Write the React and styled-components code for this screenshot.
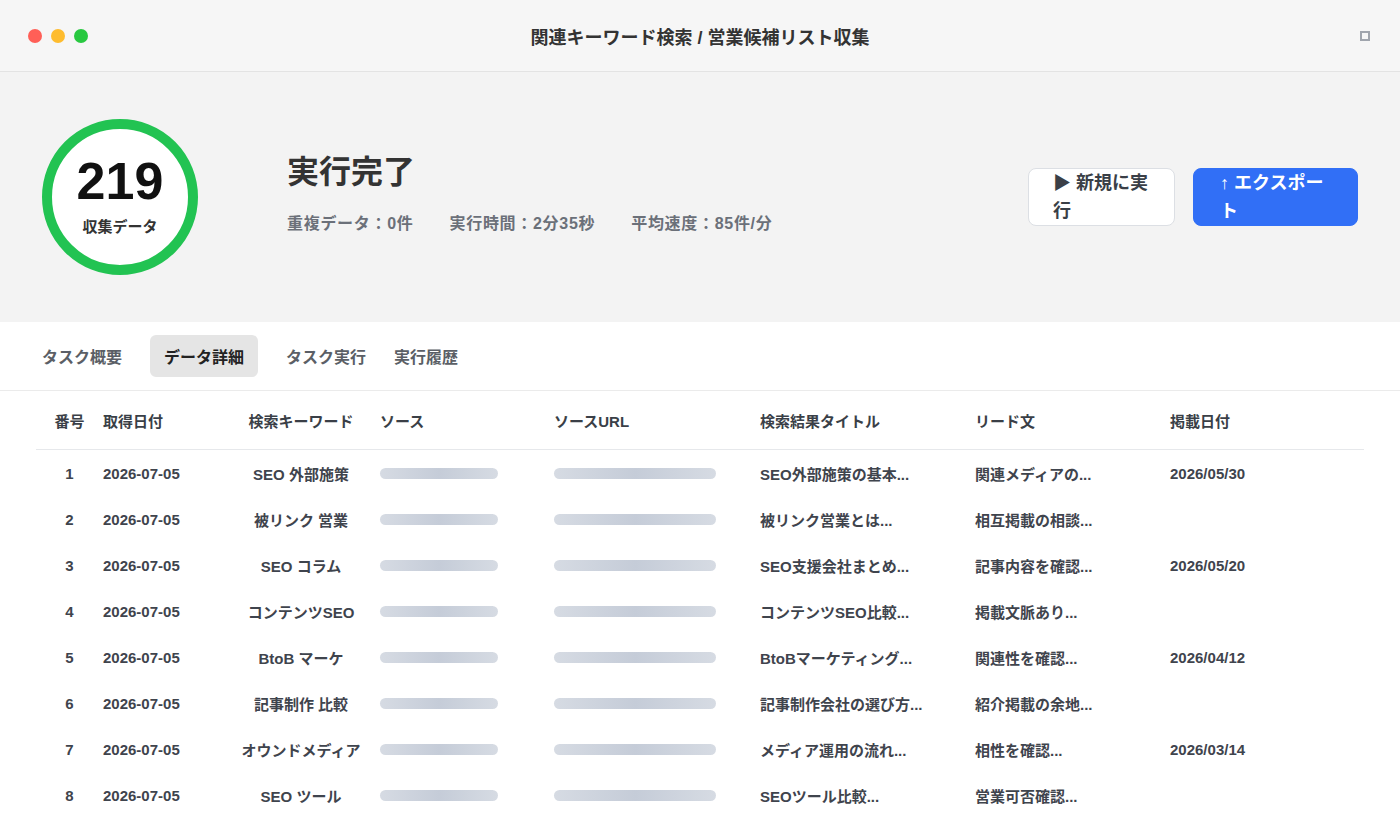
import React from 'react';
import styled, { createGlobalStyle } from 'styled-components';

const rows = [
    { id: 1, date: '2026-07-05', keyword: 'SEO 外部施策', title: 'SEO外部施策の基本...', lead: '関連メディアの...', posted: '2026/05/30' },
    { id: 2, date: '2026-07-05', keyword: '被リンク 営業', title: '被リンク営業とは...', lead: '相互掲載の相談...', posted: '' },
    { id: 3, date: '2026-07-05', keyword: 'SEO コラム', title: 'SEO支援会社まとめ...', lead: '記事内容を確認...', posted: '2026/05/20' },
    { id: 4, date: '2026-07-05', keyword: 'コンテンツSEO', title: 'コンテンツSEO比較...', lead: '掲載文脈あり...', posted: '' },
    { id: 5, date: '2026-07-05', keyword: 'BtoB マーケ', title: 'BtoBマーケティング...', lead: '関連性を確認...', posted: '2026/04/12' },
    { id: 6, date: '2026-07-05', keyword: '記事制作 比較', title: '記事制作会社の選び方...', lead: '紹介掲載の余地...', posted: '' },
    { id: 7, date: '2026-07-05', keyword: 'オウンドメディア', title: 'メディア運用の流れ...', lead: '相性を確認...', posted: '2026/03/14' },
    { id: 8, date: '2026-07-05', keyword: 'SEO ツール', title: 'SEOツール比較...', lead: '営業可否確認...', posted: '' },
];

const tabs = ['タスク概要', 'データ詳細', 'タスク実行', '実行履歴'];

const App = () => {
    return (
        <>
            <GlobalStyle />
            <Window>
                <TitleBar>
                    <Lights>
                        <Light color="#ff5f57" />
                        <Light color="#febc2e" />
                        <Light color="#28c840" />
                    </Lights>
                    <WindowTitle>関連キーワード検索 / 営業候補リスト収集</WindowTitle>
                    <BarRight>
                        <MaxIcon />
                    </BarRight>
                </TitleBar>

                <Summary>
                    <Ring>
                        <Count>219</Count>
                        <CountLabel>収集データ</CountLabel>
                    </Ring>
                    <Status>
                        <StatusTitle>実行完了</StatusTitle>
                        <Stats>
                            <span>重複データ：0件</span>
                            <span>実行時間：2分35秒</span>
                            <span>平均速度：85件/分</span>
                        </Stats>
                    </Status>
                    <Actions>
                        <Button width={147} pad={24}>▶ 新規に実行</Button>
                        <Button primary width={165} pad={26}>↑ エクスポート</Button>
                    </Actions>
                </Summary>

                <Tabs>
                    {tabs.map(t => (
                        <Tab key={t} active={t === 'データ詳細'}>{t}</Tab>
                    ))}
                </Tabs>

                <Table>
                    <HeadRow>
                        <Cell align="center">番号</Cell>
                        <Cell>取得日付</Cell>
                        <Cell align="center" padRight={11}>検索キーワード</Cell>
                        <Cell>ソース</Cell>
                        <Cell>ソースURL</Cell>
                        <Cell>検索結果タイトル</Cell>
                        <Cell>リード文</Cell>
                        <Cell>掲載日付</Cell>
                    </HeadRow>
                    {rows.map(r => (
                        <Row key={r.id}>
                            <Cell align="center">{r.id}</Cell>
                            <Cell>{r.date}</Cell>
                            <Cell align="center" padRight={11}>{r.keyword}</Cell>
                            <Cell><Skeleton width={118} /></Cell>
                            <Cell><Skeleton width={162} /></Cell>
                            <Cell>{r.title}</Cell>
                            <Cell>{r.lead}</Cell>
                            <Cell>{r.posted}</Cell>
                        </Row>
                    ))}
                </Table>
            </Window>
        </>
    )
}

export default App

const GlobalStyle = createGlobalStyle`
    html, body {
        margin: 0;
        padding: 0;
        background: #ffffff;
    }
    body {
        font-family: "Liberation Sans", "Noto Sans CJK JP", sans-serif;
        overflow: hidden;
    }
`

const Window = styled.div`
    width: 1400px;
    height: 820px;
    overflow: hidden;
    background: #ffffff;
`

const TitleBar = styled.div`
    height: 71px;
    border-bottom: 1px solid #e3e3e3;
    background: #f6f6f6;
    display: grid;
    grid-template-columns: 1fr auto 1fr;
    align-items: center;
    padding: 0 28px;
`

const Lights = styled.div`
    display: flex;
    gap: 9px;
`

const Light = styled.span`
    width: 14px;
    height: 14px;
    border-radius: 50%;
    background: ${p => p.color};
`

const WindowTitle = styled.div`
    font-size: 18px;
    font-weight: 700;
    color: #333333;
`

const BarRight = styled.div`
    display: flex;
    justify-content: flex-end;
`

const MaxIcon = styled.span`
    box-sizing: border-box;
    width: 10px;
    height: 10px;
    border: 2px solid #a0a5ad;
    margin-right: 2px;
    margin-top: 1px;
`

const Summary = styled.div`
    height: 250px;
    background: #f3f3f3;
    display: flex;
    align-items: center;
    padding: 0 42px;
`

const Ring = styled.div`
    width: 136px;
    height: 136px;
    border: 10px solid #22c352;
    border-radius: 50%;
    background: #ffffff;
    display: flex;
    flex-direction: column;
    align-items: center;
    justify-content: center;
    flex-shrink: 0;
`

const Count = styled.div`
    font-size: 52px;
    font-weight: 700;
    color: #111111;
    line-height: 56px;
    margin-top: -6px;
`

const CountLabel = styled.div`
    font-size: 15px;
    font-weight: 700;
    color: #333333;
    margin-top: 6px;
`

const Status = styled.div`
    flex: 1;
    margin-left: 89px;
    display: flex;
    flex-direction: column;
    gap: 18px;
    padding-bottom: 8px;
`

const StatusTitle = styled.h1`
    margin: 0;
    font-size: 32px;
    font-weight: 700;
    color: #333333;
    line-height: 40px;
`

const Stats = styled.div`
    display: flex;
    gap: 36px;
    font-size: 16px;
    font-weight: 700;
    letter-spacing: 0.7px;
    color: #6b7079;
`

const Actions = styled.div`
    display: flex;
    gap: 18px;
`

const Button = styled.button`
    width: ${p => p.width}px;
    height: 58px;
    padding: 0 ${p => p.pad - 2}px 0 ${p => p.pad}px;
    border-radius: 8px;
    border: 1px solid ${p => (p.primary ? '#316ff6' : '#dcdfe4')};
    background: ${p => (p.primary ? '#316ff6' : '#ffffff')};
    color: ${p => (p.primary ? '#ffffff' : '#3a3f47')};
    font-family: inherit;
    font-size: 18px;
    font-weight: 700;
    line-height: 28px;
    text-align: left;
    cursor: pointer;
`

const Tabs = styled.div`
    height: 69px;
    box-sizing: border-box;
    border-bottom: 1px solid #ebebeb;
    display: flex;
    align-items: center;
    padding: 0 28px;
`

const Tab = styled.div`
    height: 42px;
    padding: 0 14px;
    margin: ${p => (p.active ? '0 14px' : '0')};
    display: flex;
    align-items: center;
    border-radius: 6px;
    font-size: 16px;
    font-weight: 700;
    color: ${p => (p.active ? '#222222' : '#5b5f66')};
    background: ${p => (p.active ? '#e5e5e5' : 'transparent')};
`

const Table = styled.div`
    padding: 0 36px;
`

const HeadRow = styled.div`
    display: grid;
    grid-template-columns: 67px 130px 147px 174px 206px 215px 195px 1fr;
    height: 58px;
    align-items: center;
    border-bottom: 1px solid #e6e8eb;
    font-size: 15px;
    font-weight: 700;
    color: #3a3f47;
`

const Row = styled(HeadRow)`
    height: 46px;
    border-bottom: none;
    color: #3f444d;
`

const Cell = styled.div`
    padding-right: ${p => p.padRight || 0}px;
    white-space: nowrap;
    display: flex;
    justify-content: ${p => (p.align === 'center' ? 'center' : 'flex-start')};
    align-items: center;
`

const Skeleton = styled.div`
    width: ${p => p.width}px;
    height: 11px;
    border-radius: 6px;
    background: linear-gradient(90deg, #d6dbe3 0%, #c5ccd8 50%, #d6dbe3 100%);
`
